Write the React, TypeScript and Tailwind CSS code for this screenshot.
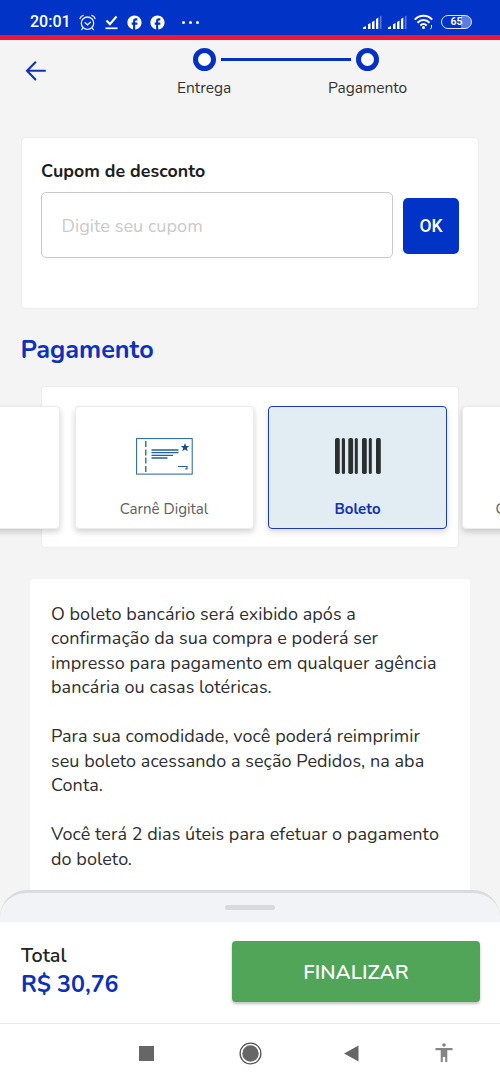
import type { ReactNode } from "react";
import { MdFacebook } from "react-icons/md";

function StatusBar() {
  return (
    <div className="flex h-[35px] shrink-0 items-center bg-[#0033c6] pt-[9px] pl-[30px] font-['Roboto'] text-white">
      <span className="w-[41px] text-[16px] leading-none font-medium">20:01</span>
      <svg className="ml-[8px]" width="17" height="17" viewBox="0 0 17 17" fill="none" stroke="#e8eeff" strokeWidth="1.3" strokeLinecap="round">
        <circle cx="8.5" cy="9.2" r="6.2" />
        <path d="M6 8.8l2.5 2 3-2.5M1 4.5C1.3 3 2.5 1.8 4.2 1.3M16 4.5c-.3-1.5-1.500-2.700-3.200-3.200M3.800 14.200L2.600 15.600M13.200 14.200l1.200 1.400" />
      </svg>
      <svg className="ml-[9px]" width="13" height="15" viewBox="0 0 13 15" fill="none" stroke="white">
        <path d="M1.500 5.500l3.400 3.600L11.500 1.500" strokeWidth="2.200" />
        <path d="M0.500 13.300h12" strokeWidth="1.700" />
      </svg>
      <MdFacebook className="ml-[8px]" size={17} />
      <MdFacebook className="ml-[6px]" size={17} />
      <span className="ml-[16px] flex gap-[4px]">
        <i className="size-[3px] rounded-full bg-white" />
        <i className="size-[3px] rounded-full bg-white" />
        <i className="size-[3px] rounded-full bg-white" />
      </span>
      <Signal className="ml-[164px]" />
      <Signal className="ml-[6px]" />
      <svg className="ml-[7px]" width="20" height="16" viewBox="0 0 20 16" fill="none" stroke="white" strokeWidth="2">
        <path d="M.8 5.600C5.800.600 13.200.600 18.200 5.600M3.500 8.700c3.500-3.500 8.500-3.500 12 0M6.300 11.500c2-1.900 4.400-1.900 6.400 0" />
        <circle cx="9.500" cy="13.600" r="1.500" fill="white" stroke="none" />
        <path d="M17.500 11v2.400M17.500 13.400l-1 1.800" strokeWidth="1" />
      </svg>
      <span className="ml-[7px] flex h-[14px] w-[31px] items-center justify-center rounded-full border-[1.500px] border-[#dfe7ff] bg-linear-to-r from-[#0033c6] from-65% to-[#5b7edd] to-65% text-[10.500px] leading-none font-bold">
        65
      </span>
    </div>
  );
}

function Signal({ className }: { className: string }) {
  return (
    <svg className={className} width="19" height="14" viewBox="0 0 19 14" fill="white">
      <path d="M0 12.500l3-1.500v3H0zM5 9.300l2.500-1.200V14H5zM9 7l2.500-1.500V14H9zM13 4l2.300-1.500V14H13z" />
      <path d="M16.800 1.500L18.500.500V14h-1.700z" opacity=".35" />
    </svg>
  );
}

function Dot() {
  return <span className="size-[23px] shrink-0 rounded-full border-[5px] border-[#0431c2] bg-white" />;
}

function Header() {
  return (
    <header className="flex h-[97px] items-start">
      <svg className="mt-[20px] ml-[25px]" width="22" height="22" viewBox="0 0 22 22" fill="none" stroke="#1231b8" strokeWidth="2.100">
        <path d="M20.800 10.800H2.500M10.900 1.700L2 10.800l8.900 9.100" />
      </svg>
      <div className="ml-[117px] w-[256px] pt-[8px]">
        <div className="flex items-center pl-[28.500px]">
          <Dot />
          <span className="mx-[5px] h-[3px] w-[130.500px] bg-[#0431c2]" />
          <Dot />
        </div>
        <div className="mt-[5px] flex text-[15.500px] leading-[24px] text-[#333]">
          <span className="ml-[13px] w-[151px]">Entrega</span>
          <span>Pagamento</span>
        </div>
      </div>
    </header>
  );
}

function Coupon() {
  return (
    <section className="ml-[21px] h-[172px] w-[458px] rounded-[5px] border border-[#ececec] bg-white px-[19px] pt-[21px]">
      <h2 className="text-[17.800px] leading-[24px] font-bold tracking-[0.050px] text-[#1d1d1f]">Cupom de desconto</h2>
      <div className="mt-[9px] flex items-center gap-[10px]">
        <div className="flex h-[66px] w-[353px] items-center rounded-[5px] border border-[#c9c9c9] pt-[3px] pl-[19.500px] text-[18.100px] tracking-[0.030px] text-[#cacaca]">
          Digite seu cupom
        </div>
        <button className="mt-px h-[56px] w-[56px] rounded-[5px] bg-[#0033c6] pt-[2px] font-['Roboto'] text-[17.500px] font-medium text-white">OK</button>
      </div>
    </section>
  );
}

const cardBase = "flex h-[123px] w-[179px] shrink-0 flex-col items-center rounded-[4px]";
const cardPlain = "border border-[#ececec] bg-white shadow-[0_3px_6px_rgba(0,0,0,0.180)]";

function Card({ plain = true, children }: { plain?: boolean; children?: ReactNode }) {
  return (
    <div className={`${cardBase} ${plain ? cardPlain : "border-[1.500px] border-[#1c39ad] bg-[#e2edf3] shadow-[0_3px_6px_rgba(0,0,0,0.150)]"}`}>
      {children}
    </div>
  );
}

function PaymentMethods() {
  return (
    <section className="mt-[22px] ml-[41px] h-[162px] w-[418px] rounded-[4px] border border-[#ececec] bg-white pt-[19px]">
      <div className="-ml-[161px] flex w-[810px] gap-[14.500px]">
        <Card />
        <Card>
          <svg className="mt-[31px]" width="57" height="37" viewBox="0 0 57 37" fill="none" stroke="#24609b">
            <rect x=".6" y=".6" width="55.600" height="35.500" strokeWidth="1" />
            <path d="M9.800 3v6M9.800 11.500v6M9.800 19.500v6M9.800 28v6" strokeWidth="1.300" />
            <path d="M15.500 12H42.500M15.500 14.700H42.500M15.500 17.300H37M15.500 20H31.500" strokeWidth="1.300" />
            <path d="M42 28.500h9v2.500h-2" strokeWidth="1.200" />
            <path d="M49 5l1.100 3 3.200.100-2.500 2 1 3.200-2.800-1.900-2.800 1.900 1-3.200-2.500-2 3.200-.100z" fill="#154f91" stroke="none" />
          </svg>
          <span className="mt-[23px] text-[15.100px] leading-[22px] text-[#5e5e5e]">Carnê Digital</span>
        </Card>
        <Card plain={false}>
          <svg className="mt-[31px]" width="46" height="37" viewBox="0 0 46 37" fill="#2c2f30">
            <rect x="0" y="0" width="4.800" height="36" rx="1.800" />
            <rect x="6.800" y="0" width="3.200" height="36" rx="1.500" />
            <rect x="13.300" y="0" width="4.800" height="36" rx="1.800" />
            <rect x="19.800" y="0" width="3" height="36" rx="1.500" />
            <rect x="27" y="0" width="4.800" height="36" rx="1.800" />
            <rect x="33.800" y="0" width="3" height="36" rx="1.500" />
            <rect x="41" y="0" width="4.800" height="36" rx="1.800" />
          </svg>
          <span className="mt-[23px] text-[15px] leading-[22px] font-bold text-[#1232b5]">Boleto</span>
        </Card>
        <Card>
          <span className="mt-[91px] w-full pl-[33px] text-[15px] leading-[22px] text-[#5e5e5e]">C</span>
        </Card>
      </div>
    </section>
  );
}

function Info() {
  return (
    <section className="mt-[31px] ml-[30px] h-[360px] w-[440px] rounded-[4px] bg-white pt-[22.500px] pl-[21px] text-[18px] leading-[24.500px] tracking-[0.060px] whitespace-nowrap text-[#2e2e2e]">
      <p>
        O boleto bancário será exibido após a<br />
        confirmação da sua compra e poderá ser<br />
        impresso para pagamento em qualquer agência<br />
        bancária ou casas lotéricas.
      </p>
      <p className="mt-[24.500px]">
        Para sua comodidade, você poderá reimprimir<br />
        seu boleto acessando a seção Pedidos, na aba<br />
        Conta.
      </p>
      <p className="mt-[24.500px]">
        Você terá 2 dias úteis para efetuar o pagamento<br />
        do boleto.
      </p>
    </section>
  );
}

function Checkout() {
  return (
    <>
      <div className="relative -mt-[32px] flex h-[32px] shrink-0 justify-center rounded-t-[27px] border-t-[3px] border-[#dadbdc] bg-[#f1f3f6] pt-[12px]">
        <span className="h-[5px] w-[50px] rounded-full bg-[#d8d9db]" />
      </div>
      <div className="flex h-[101px] shrink-0 items-start justify-between bg-white pt-[19px] pr-[20px] pl-[21px]">
        <div className="pt-[1px]">
          <p className="text-[19.800px] leading-[28px] font-semibold text-[#222]">Total</p>
          <p className="text-[23.200px] leading-[29px] font-bold text-[#0b31b8]">R$ 30,76</p>
        </div>
        <button className="h-[61px] w-[248px] rounded-[4px] bg-[#50a558] pt-[2px] text-[20.600px] font-semibold text-white shadow-[0_2px_3px_rgba(0,0,0,0.250)]">FINALIZAR</button>
      </div>
    </>
  );
}

function NavBar() {
  return (
    <nav className="flex h-[60px] shrink-0 items-center border-t border-[#ececec] bg-white pl-[138.500px]">
      <span className="size-[15px] bg-[#666]" />
      <svg className="ml-[85px]" width="23" height="23" viewBox="0 0 23 23">
        <circle cx="11.500" cy="11.500" r="10.400" fill="none" stroke="#555" strokeWidth="1.300" />
        <circle cx="11.500" cy="11.500" r="8.200" fill="#666" />
      </svg>
      <svg className="ml-[82.500px]" width="15" height="17" viewBox="0 0 15 17" fill="#666">
        <path d="M14.500.500v16L0 8.500z" />
      </svg>
      <svg className="-mt-[3px] ml-[76px]" width="18" height="19" viewBox="0 0 18 19" fill="#858585">
        <circle cx="9" cy="2" r="1.800" />
        <path d="M.500 5h17v2.200H12.300v11.800h-2.100v-5H7.800v5H5.700V7.200H.500z" />
      </svg>
    </nav>
  );
}

export default function App() {
  return (
    <div className="flex h-[1083px] w-[500px] flex-col overflow-hidden bg-[#f4f4f4] font-['Nunito','Lato',sans-serif]">
      <StatusBar />
      <div className="h-[5px] shrink-0 bg-[#ed173b]" />
      <main className="h-[882px] shrink-0 overflow-hidden">
        <Header />
        <Coupon />
        <h1 className="mt-[26px] -mb-px ml-[20.500px] text-[25.200px] leading-[30px] font-bold text-[#0b31bd]">Pagamento</h1>
        <PaymentMethods />
        <Info />
      </main>
      <Checkout />
      <NavBar />
    </div>
  );
}
